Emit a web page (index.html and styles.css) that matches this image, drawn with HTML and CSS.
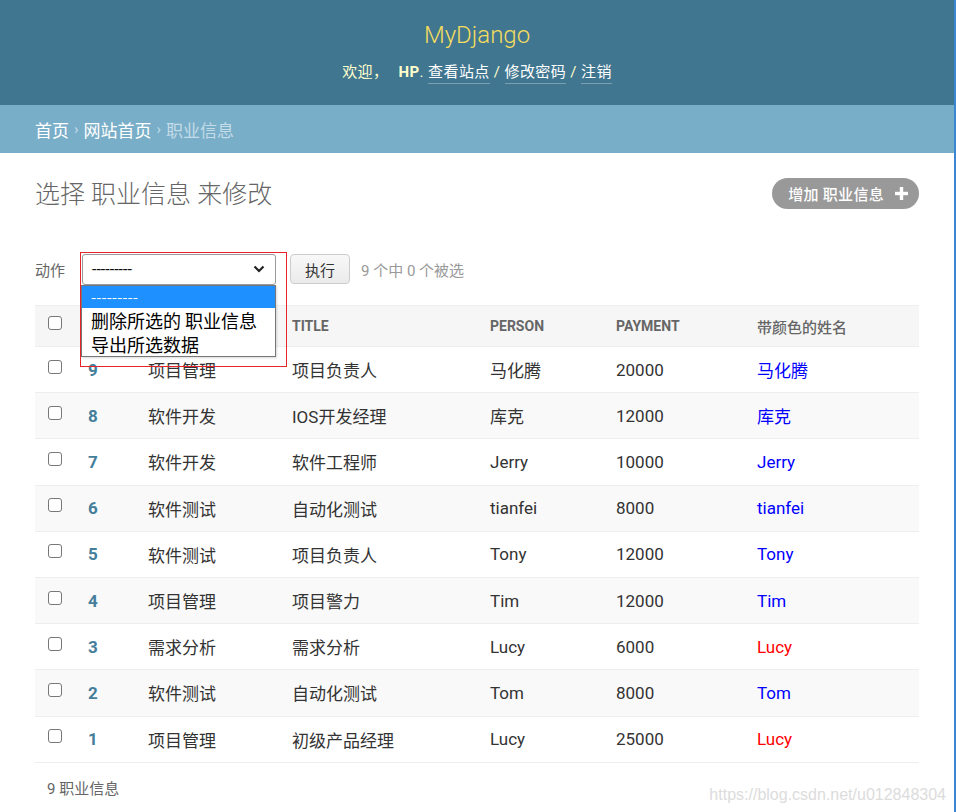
FILE: index.html
```html
<!DOCTYPE html>
<html lang="zh">
<head>
<meta charset="utf-8">
<title>选择 职业信息 来修改</title>
<link rel="stylesheet" href="styles.css">
</head>
<body>
<div class="page">
  <header class="header">
    <div class="branding">MyDjango</div>
    <div class="user-tools">欢迎， <strong>HP</strong>. <a href="#">查看站点</a> / <a href="#">修改密码</a> / <a href="#">注销</a></div>
  </header>
  <nav class="breadcrumbs"><a href="#">首页</a><span class="sep">›</span><a href="#">网站首页</a><span class="sep">›</span><span class="current">职业信息</span></nav>
  <main class="content">
    <div class="title-row">
      <h1 class="title">选择 职业信息 来修改</h1>
      <a class="addlink" href="#">增加 职业信息<svg class="plus" width="13" height="13" viewBox="0 0 13 13"><rect x="4.8" y="0" width="3.4" height="13" fill="#fff"/><rect x="0" y="4.8" width="13" height="3.4" fill="#fff"/></svg></a>
    </div>
    <div class="actions">
      <span class="actions-label">动作</span>
      <div class="select-wrap">
        <div class="select"><span>---------</span><svg class="chev" width="12" height="8" viewBox="0 0 12 8"><path d="M1.5 1.5 L6 6 L10.5 1.5" fill="none" stroke="#222" stroke-width="2.2"/></svg></div>
        <div class="options">
          <div class="option selected">---------</div>
          <div class="option">删除所选的 职业信息</div>
          <div class="option">导出所选数据</div>
        </div>
        <div class="annot"></div>
      </div>
      <button class="go">执行</button>
      <span class="counter">9 个中 0 个被选</span>
    </div>
    <table class="results">
      <colgroup><col class="c1"><col class="c2"><col class="c3"><col class="c4"><col class="c5"><col class="c6"><col class="c7"></colgroup>
      <thead>
        <tr><th><input type="checkbox"></th><th></th><th></th><th>TITLE</th><th>PERSON</th><th>PAYMENT</th><th class="cn">带颜色的姓名</th></tr>
      </thead>
      <tbody>
        <tr><td><input type="checkbox"></td><td class="id">9</td><td>项目管理</td><td>项目负责人</td><td>马化腾</td><td>20000</td><td class="blue">马化腾</td></tr>
        <tr><td><input type="checkbox"></td><td class="id">8</td><td>软件开发</td><td>IOS开发经理</td><td>库克</td><td>12000</td><td class="blue">库克</td></tr>
        <tr><td><input type="checkbox"></td><td class="id">7</td><td>软件开发</td><td>软件工程师</td><td>Jerry</td><td>10000</td><td class="blue">Jerry</td></tr>
        <tr><td><input type="checkbox"></td><td class="id">6</td><td>软件测试</td><td>自动化测试</td><td>tianfei</td><td>8000</td><td class="blue">tianfei</td></tr>
        <tr><td><input type="checkbox"></td><td class="id">5</td><td>软件测试</td><td>项目负责人</td><td>Tony</td><td>12000</td><td class="blue">Tony</td></tr>
        <tr><td><input type="checkbox"></td><td class="id">4</td><td>项目管理</td><td>项目警力</td><td>Tim</td><td>12000</td><td class="blue">Tim</td></tr>
        <tr><td><input type="checkbox"></td><td class="id">3</td><td>需求分析</td><td>需求分析</td><td>Lucy</td><td>6000</td><td class="red">Lucy</td></tr>
        <tr><td><input type="checkbox"></td><td class="id">2</td><td>软件测试</td><td>自动化测试</td><td>Tom</td><td>8000</td><td class="blue">Tom</td></tr>
        <tr><td><input type="checkbox"></td><td class="id">1</td><td>项目管理</td><td>初级产品经理</td><td>Lucy</td><td>25000</td><td class="red">Lucy</td></tr>
      </tbody>
    </table>
    <div class="footer-row">
      <p class="paginator">9 职业信息</p>
      <span class="watermark">https://blog.csdn.net/u012848304</span>
    </div>
  </main>
</div>
</body>
</html>
```
FILE: styles.css
```css
html, body { margin: 0; padding: 0; }
body {
  font-family: Roboto, "Noto Sans CJK SC", "Liberation Sans", sans-serif;
  color: #333;
  background: #fff;
}
.page {
  min-height: 812px;
  border-right: 2px solid #3a86d0;
  box-sizing: border-box;
  overflow: hidden;
}
a { text-decoration: none; }

.header {
  background: #417690;
  height: 105px;
  box-sizing: border-box;
  padding-top: 20px;
  text-align: center;
}
.branding {
  font-weight: 300;
  font-size: 24px;
  line-height: 30px;
  color: #f5dd5d;
}
.user-tools {
  margin-top: 12px;
  font-size: 15px;
  line-height: 20px;
  color: #ffc;
  letter-spacing: 0.4px;
}
.user-tools strong { font-weight: 700; margin-left: 6px; }
.user-tools a {
  color: #fff;
  border-bottom: 1px solid rgba(255,255,255,0.3);
  padding-bottom: 2px;
}

.breadcrumbs {
  background: #79aec8;
  height: 48px;
  box-sizing: border-box;
  padding: 0 35px;
  display: flex;
  align-items: center;
  font-size: 17px;
  color: #c4dce8;
}
.breadcrumbs a { color: #fff; }
.breadcrumbs .sep { margin: 0 5px; font-size: 15px; }
.breadcrumbs .current { color: #c4dce8; }

.content { padding: 0 35px 0 35px; }
.title-row {
  display: flex;
  justify-content: space-between;
  align-items: center;
  padding-top: 26px;
  height: 32px;
}
.title {
  margin: 0;
  font-size: 25px;
  font-weight: 300;
  color: #666;
  line-height: 32px;
}
.addlink {
  display: flex;
  align-items: center;
  gap: 11px;
  background: #999;
  color: #fff;
  border-radius: 16px;
  height: 31px;
  padding: 0 11px 0 16px;
  font-size: 15px;
  font-weight: 500;
  letter-spacing: 0.3px;
  position: relative;
  top: -2px;
}

.actions {
  display: flex;
  align-items: center;
  margin-top: 42px;
  height: 32px;
  font-size: 15px;
}
.actions-label { color: #666; margin-right: 17px; }
.select-wrap { position: relative; width: 194px; height: 31px; }
.select {
  box-sizing: border-box;
  width: 194px;
  height: 31px;
  border: 1px solid #9a9a9a;
  border-radius: 3px;
  display: flex;
  align-items: center;
  justify-content: space-between;
  padding: 0 10px 0 9px;
  font-size: 16px;
  color: #111;
  background: #fff;
}
.options {
  position: absolute;
  left: -1px;
  top: 31px;
  width: 195px;
  box-sizing: border-box;
  border: 1px solid #777;
  background: #fff;
  z-index: 5;
  box-shadow: 1px 1px 2px rgba(0,0,0,0.15);
}
.option {
  height: 24px;
  line-height: 24px;
  padding: 0 9px;
  font-size: 18px;
  color: #000;
  font-family: "Noto Sans CJK SC", sans-serif;
  white-space: nowrap;
}
.option.selected {
  background: #1e90ff;
  color: #fff;
  font-size: 15px;
  height: 22px;
  line-height: 22px;
}
.annot {
  position: absolute;
  left: -2px;
  top: -2px;
  width: 207px;
  height: 115px;
  box-sizing: border-box;
  border: 1px solid #e8242b;
  z-index: 6;
  pointer-events: none;
}
.go {
  margin-left: 14px;
  height: 30px;
  width: 60px;
  border: 1px solid #ccc;
  border-radius: 4px;
  background: linear-gradient(#f8f8f8, #eaeaea);
  font-family: "Noto Sans CJK SC", sans-serif;
  font-size: 15px;
  color: #333;
  padding: 0;
}
.counter { margin-left: 11px; color: #999; font-size: 15px; }

.results {
  margin-top: 20px;
  width: 884px;
  border-collapse: collapse;
  table-layout: fixed;
}
.c1 { width: 41px; } .c2 { width: 60px; } .c3 { width: 144px; } .c4 { width: 198px; }
.c5 { width: 126px; } .c6 { width: 141px; } .c7 { width: 174px; }
.results th {
  background: #f6f6f6;
  border-top: 1px solid #eee;
  border-bottom: 1px solid #eee;
  height: 40px;
  padding: 0 12px;
  text-align: left;
  font-size: 14px;
  font-weight: 700;
  color: #666;
  text-transform: uppercase;
}
.results th.cn { font-weight: 500; font-size: 15px; }
.results th:first-child, .results td:first-child { padding-left: 13px; padding-right: 0; }
.results td {
  height: 45.2px;
  padding: 0 12px;
  border-bottom: 1px solid #eee;
  font-size: 17px;
  color: #333;
}
.results tbody tr:nth-child(even) td { background: #f9f9f9; }
.results td.id { color: #447e9b; font-weight: 700; }
.results td.blue { color: #0000ff; }
.results td.red { color: #ff0000; }
input[type="checkbox"] {
  appearance: none;
  -webkit-appearance: none;
  width: 14px;
  height: 14px;
  margin: 0;
  border: 1px solid #777;
  border-radius: 3px;
  background: #fff;
  display: block;
  position: relative;
  top: -3px;
}

.footer-row {
  display: flex;
  justify-content: space-between;
  align-items: center;
  height: 50px;
}
.paginator { margin: 0 0 0 12px; font-size: 15px; color: #666; }
.watermark {
  font-family: "Liberation Sans", sans-serif;
  font-size: 16px;
  color: #dcdcdc;
  margin-right: -27px;
  position: relative;
  top: 7px;
}
```
